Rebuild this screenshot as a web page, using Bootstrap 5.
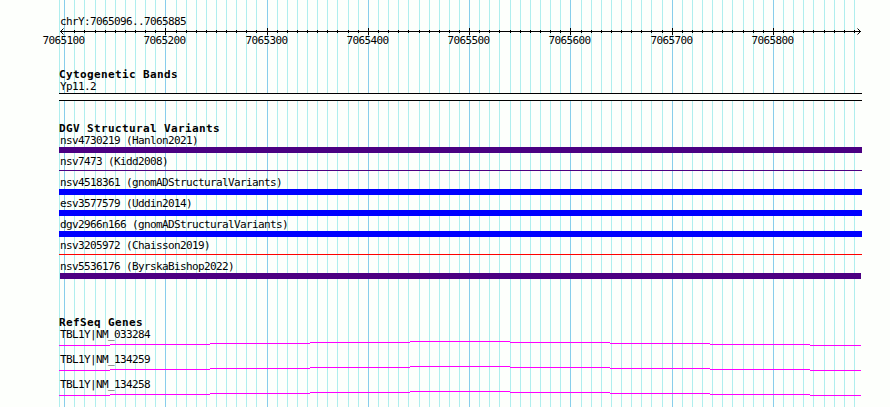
<!DOCTYPE html>
<html lang="en">
<head>
    <meta charset="UTF-8">
    <meta name="viewport" content="width=device-width, initial-scale=1">
    <title>chrY:7065096..7065885</title>

    <link href="https://cdn.jsdelivr.net/npm/bootstrap@5.3.0/dist/css/bootstrap.min.css" rel="stylesheet">
    <style>
        body {
            background: #fdfffc;
            color: #000;
            font-family: "DejaVu Sans Mono", "Liberation Mono", monospace;
            font-size: 11px;
            line-height: 13px;
            letter-spacing: -0.622px;
        }
        .browser { width: 890px; height: 407px; padding-left: 59px; }
        .gridlines { z-index: 0; }
        .tracks { width: 803px; z-index: 1; }
        .region { height: 13px; margin-top: 15px; padding-left: 1px; }
        .ruler { height: 20px; margin-left: -59px; width: 890px; overflow: visible; }
        .bands { margin-top: 20px; }
        .structural { margin-top: 21px; }
        .refseq { margin-top: 35px; }
        .track-title {
            height: 12px;
            font-size: 11px;
            font-weight: bold;
            line-height: 13px;
            letter-spacing: 0.378px;
            margin: 0;
        }
        .track-label { height: 13px; padding-left: 1px; }
        .band { height: 8px; border-top: 1px solid #000; border-bottom: 1px solid #000; background: #fdfffc; }
        .variant { height: 21px; }
        .variant .glyph { height: 6px; }
        .variant .thin { height: 1px; margin-top: 2px; }
        .variant .inset { margin: 0 1px; }
        .indigo { background: #4b0082; }
        .blue { background: #0000ff; }
        .red { background: #ff0000; }
        .gene { height: 25px; }
    </style>
</head>
<body>

<div class="browser position-relative overflow-hidden">
    <svg class="gridlines position-absolute top-0 start-0" width="890" height="407" shape-rendering="crispEdges" id="gridlines"></svg>

    <div class="tracks position-relative d-flex flex-column">
        <div class="region text-nowrap">chrY:7065096..7065885</div>
        <svg class="ruler" id="ruler" width="890" height="20"></svg>

        <!-- Cytogenetic bands -->
        <section class="bands">
            <h2 class="track-title text-nowrap">Cytogenetic Bands</h2>
            <div class="track-label text-nowrap">Yp11.2</div>
            <div class="band"></div>
        </section>

        <!-- Structural variants -->
        <section class="structural">
            <h2 class="track-title text-nowrap">DGV Structural Variants</h2>
            <div id="variants"></div>
        </section>

        <!-- Genes -->
        <section class="refseq">
            <h2 class="track-title text-nowrap">RefSeq Genes</h2>
            <div id="genes"></div>
        </section>
    </div>
</div>

<script src="https://cdn.jsdelivr.net/npm/bootstrap@5.3.0/dist/js/bootstrap.bundle.min.js"></script>
<script>
    const variants = [
        { name: "nsv4730219 (Hanlon2021)", style: "indigo" },
        { name: "nsv7473 (Kidd2008)", style: "indigo thin" },
        { name: "nsv4518361 (gnomADStructuralVariants)", style: "blue" },
        { name: "esv3577579 (Uddin2014)", style: "blue" },
        { name: "dgv2966n166 (gnomADStructuralVariants)", style: "blue" },
        { name: "nsv3205972 (Chaisson2019)", style: "red thin" },
        { name: "nsv5536176 (ByrskaBishop2022)", style: "indigo inset" }
    ];
    const genes = ["TBL1Y|NM_033284", "TBL1Y|NM_134259", "TBL1Y|NM_134258"];

    // one line per 10 bp, the extra pixel is added at these steps
    const extra = [3, 11, 20, 28, 35, 44, 51, 59, 67, 75];
    const ticks = [];
    for (let i = 0; i < 79; i++) {
        ticks.push(64 + i * 10 + extra.filter(e => e <= i).length);
    }

    let lines = `<rect x="59" y="0" width="1" height="407" fill="#afeeee"/>`;
    let marks = `<path d="M60 3.5H861" stroke="#000"/>
        <path d="M63.5 .5L60.5 3.5L63.5 6.5M857.5 .5L860.5 3.5L857.5 6.5" fill="none" stroke="#000"/>`;
    ticks.forEach((x, i) => {
        const major = i % 10 === 0;
        lines += `<rect x="${x}" y="0" width="1" height="407" fill="${major ? "#87ceeb" : "#afeeee"}"/>`;
        // the arrow head takes the place of the first tick
        if (i > 0) {
            marks += `<rect x="${x}" y="${major ? 0 : 2}" width="1" height="${major ? 7 : 3}"/>`;
        }
        if (major) {
            marks += `<text x="${x - 21.5}" y="16">${7065100 + i * 10}</text>`;
        }
    });
    document.getElementById("gridlines").innerHTML = lines;
    document.getElementById("ruler").innerHTML = marks;

    document.getElementById("variants").innerHTML = variants.map(v => `
        <div class="variant">
            <div class="track-label text-nowrap">${v.name}</div>
            <div class="glyph ${v.style}"></div>
        </div>`).join("");

    // intron drawn as a stepped line
    document.getElementById("genes").innerHTML = genes.map(name => `
        <div class="gene">
            <div class="track-label text-nowrap">${name}</div>
            <svg class="d-block" width="803" height="12" shape-rendering="crispEdges">
                <path d="M0 4.5H51M51 3.5H151M151 2.5H251M251 1.5H351M351 .5H451M451 1.5H551M551 2.5H651M651 3.5H751M751 4.5H802" stroke="#ff00ff"/>
            </svg>
        </div>`).join("");
</script>

</body>
</html>
